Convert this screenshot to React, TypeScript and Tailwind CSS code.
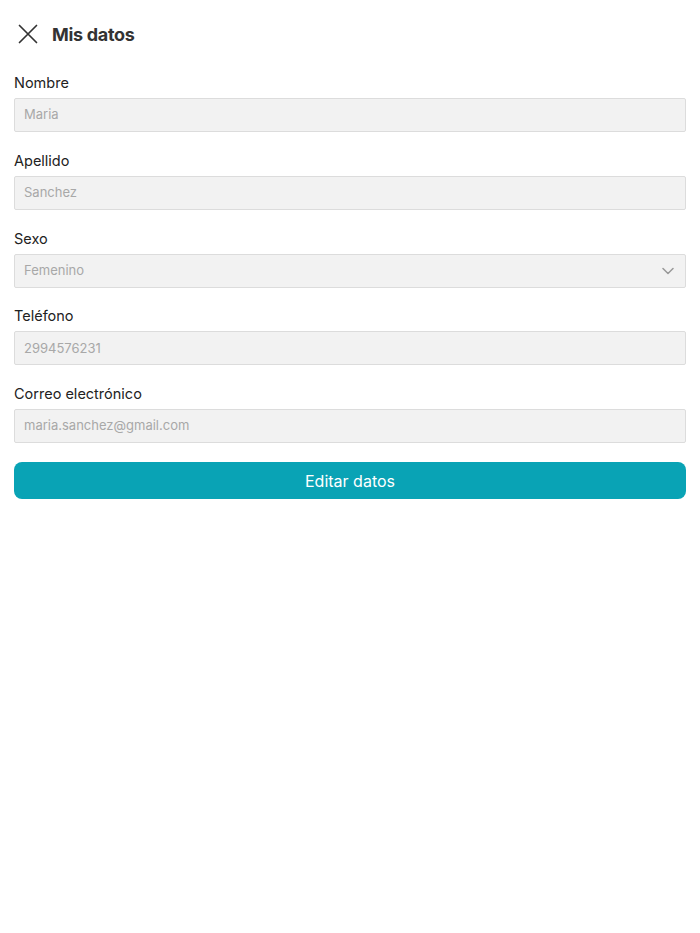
import React from "react";

const fields = [
  { label: "Nombre", value: "Maria" },
  { label: "Apellido", value: "Sanchez" },
  { label: "Sexo", value: "Femenino", select: true },
  { label: "Teléfono", value: "2994576231" },
  { label: "Correo electrónico", value: "maria.sanchez@gmail.com" },
];

export default function App() {
  return (
    <div
      className="min-h-[933px] w-full bg-white px-[14px] text-[#222]"
      style={{ fontFamily: "Inter, 'Noto Sans', sans-serif" }}
    >
      <div className="flex h-[68px] items-center gap-[14px]">
        <svg width="20" height="20" viewBox="0 0 20 20" className="ml-[4px]">
          <path d="M1.5 1.5 L18.5 18.5 M18.5 1.5 L1.5 18.5" stroke="#333" strokeWidth="1.7" strokeLinecap="round" />
        </svg>
        <h1 className="text-[18px] font-bold text-[#333] tracking-[-0.3px]">Mis datos</h1>
      </div>
      <div className="flex flex-col gap-[17.75px] pt-[4px]">
        {fields.map((f) => (
          <div key={f.label} className="flex flex-col gap-[4px]">
            <label className="text-[14.5px] leading-[22px] text-[#222]">{f.label}</label>
            <div className="flex h-[34px] items-center justify-between rounded-[2px] border border-[#dcdcdc] bg-[#f2f2f2] px-[9px]">
              <span className="text-[13px] text-[#a8a8a8]">{f.value}</span>
              {f.select && (
                <svg width="12" height="8" viewBox="0 0 12 8" className="mr-[2px]">
                  <path d="M1 1.5 L6 6.5 L11 1.5" stroke="#999" strokeWidth="1.5" fill="none" strokeLinecap="round" strokeLinejoin="round" />
                </svg>
              )}
            </div>
          </div>
        ))}
      </div>
      <button className="mt-[19px] flex h-[37px] w-full items-center justify-center rounded-[8px] bg-[#09a3b5] text-[16px] text-white">
        Editar datos
      </button>
    </div>
  );
}
